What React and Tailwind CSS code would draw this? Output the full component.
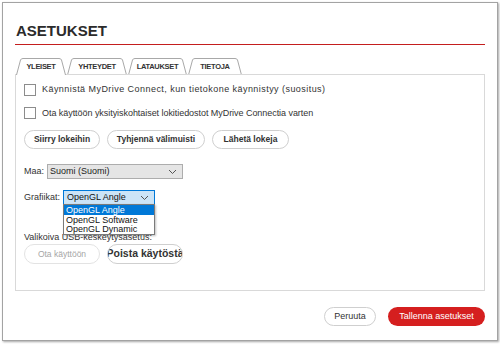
import React from 'react';

const font = { fontFamily: '"Liberation Sans", Arial, sans-serif' };

function Tab({ label, width, active }) {
  const w = width;
  return (
    <div className={`relative h-[17px] flex items-center justify-center ${active ? 'z-10' : ''}`} style={{ width: w }}>
      <svg className="absolute inset-0" width={w} height="17" viewBox={`0 0 ${w} 17`}>
        <path
          d={`M0.5,17 L4.5,2 Q5,0.5 7,0.5 L${w - 7},0.5 Q${w - 5},0.5 ${w - 4.5},2 L${w - 0.5},17`}
          fill="#fff"
          stroke="#a8a8a8"
          strokeWidth="1"
        />
        {!active && <line x1="0" y1="16.5" x2={w} y2="16.5" stroke="#d9d9d9" />}
      </svg>
      <span className="relative text-[7.5px] font-bold text-[#333] tracking-[-0.3px] pt-[1px]">{label}</span>
    </div>
  );
}

function Chevron({ className }) {
  return (
    <svg className={className} width="9" height="6" viewBox="0 0 9 6">
      <polyline points="1,1 4.5,4.5 8,1" fill="none" stroke="#555" strokeWidth="1" />
    </svg>
  );
}

function Checkbox() {
  return <div className="w-[12px] h-[12px] border border-[#8c8c8c] bg-white shrink-0" />;
}

function PillButton({ children, className = '' }) {
  return (
    <button className={`h-[19px] rounded-full border border-[#cfcfcf] bg-white text-[8.5px] font-bold text-[#333] ${className}`}>
      {children}
    </button>
  );
}

export default function App() {
  return (
    <div className="w-[500px] h-[344px] bg-white pt-[2px] pl-[2px]" style={font}>
      <div className="w-[496px] h-[339px] border border-[#a3a3a3] bg-white shadow-[1px_1px_2px_rgba(0,0,0,0.35)] px-3 pt-[19px]">
        <h1 className="pl-[1px] text-[15px] leading-[17px] font-bold text-[#2b2b2b]">ASETUKSET</h1>
        <div className="mt-[5px] h-px bg-[#c41e1e]" />

        {/* Tabs */}
        <div className="mt-[13px] flex items-end pl-[1px] gap-[1px] -mb-px relative">
          <Tab label="YLEISET" width={50} active />
          <Tab label="YHTEYDET" width={60} />
          <Tab label="LATAUKSET" width={59} />
          <Tab label="TIETOJA" width={54} />
        </div>

        {/* Panel */}
        <div className="h-[217px] border border-[#d9d9d9] pl-2 pt-2 text-[9px] text-[#333]">
          <div className="flex items-center gap-[6px]">
            <Checkbox />
            <span className="tracking-[0.45px]">Käynnistä MyDrive Connect, kun tietokone käynnistyy (suositus)</span>
          </div>
          <div className="mt-[10px] flex items-center gap-[6px]">
            <Checkbox />
            <span className="tracking-[-0.05px]">Ota käyttöön yksityiskohtaiset lokitiedostot MyDrive Connectia varten</span>
          </div>

          <div className="mt-[10px] flex gap-[7px]">
            <PillButton className="w-[76px]">Siirry lokeihin</PillButton>
            <PillButton className="w-[98px]">Tyhjennä välimuisti</PillButton>
            <PillButton className="w-[77px]">Lähetä lokeja</PillButton>
          </div>

          <div className="mt-[15px] flex items-center">
            <span className="w-[23px]">Maa:</span>
            <div className="w-[136px] h-[15px] border border-[#adadad] bg-[#e5e5e5] flex items-center justify-between pl-[2px] pr-[5px] text-[9px] text-[#222]">
              <span>Suomi (Suomi)</span>
              <Chevron />
            </div>
          </div>

          <div className="mt-[11px] flex items-center relative">
            <span className="w-[39px]">Grafiikat:</span>
            <div className="relative">
              <div className="w-[92px] h-[15px] border border-[#0078d7] bg-[#cce4f7] flex items-center justify-between pl-[3px] pr-[5px] text-[9px] text-[#111]">
                <span>OpenGL Angle</span>
                <Chevron />
              </div>
              <div className="absolute left-0 top-[14px] w-[92px] border border-[#7a7a7a] bg-white text-[9px] text-[#111] z-20 shadow-[1px_1px_2px_rgba(0,0,0,0.25)]">
                <div className="h-[10px] leading-[10px] bg-[#0078d7] text-white pl-[2px]">OpenGL Angle</div>
                <div className="h-[10px] leading-[10px] pl-[2px]">OpenGL Software</div>
                <div className="h-[9px] leading-[9px] pl-[2px]">OpenGL Dynamic</div>
              </div>
            </div>
          </div>

          <div className="mt-[27px] leading-[10px]">Valikoiva USB-keskeytysasetus:</div>
          <div className="mt-[2px] flex gap-[7px]">
            <button className="w-[76px] h-[20px] rounded-full border border-[#e3e3e3] bg-white text-[8.5px] text-[#a6a6a6]">
              Ota käyttöön
            </button>
            <div className="w-[76px] h-[20px] rounded-full border border-[#cfcfcf] bg-white overflow-hidden flex justify-center items-center">
              <span className="whitespace-nowrap text-[10.5px] font-bold text-[#333]">Poista käytöstä</span>
            </div>
          </div>
        </div>

        {/* Footer */}
        <div className="mt-[16px] flex justify-end gap-[12px]">
          <button className="w-[52px] h-[19px] rounded-full border border-[#cfcfcf] bg-white text-[9px] text-[#333]">
            Peruuta
          </button>
          <button className="w-[97px] h-[19px] rounded-full bg-[#d51f1f] text-[9px] text-white">
            Tallenna asetukset
          </button>
        </div>
      </div>
    </div>
  );
}
